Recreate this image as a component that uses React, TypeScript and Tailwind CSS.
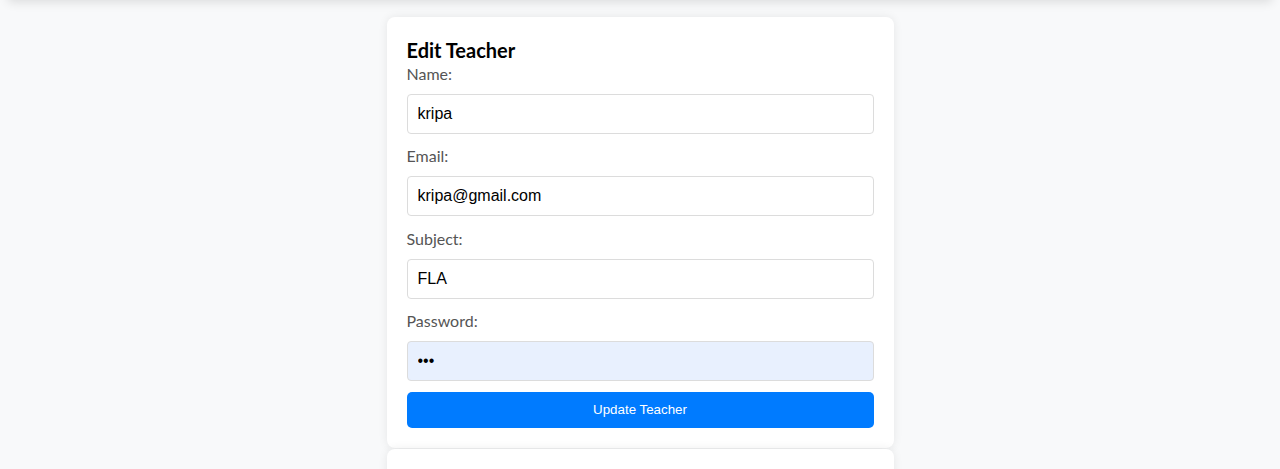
import React from "react";

const labelCls =
  "block text-[16px] leading-[20px] text-[#555] mb-[10px] font-['Lato','Noto_Sans',sans-serif]";
const inputCls =
  "block w-full h-[40px] px-[10px] border border-[#dcdcdc] rounded-[4px] text-[16px] text-black bg-white font-['Liberation_Sans',Arial,sans-serif] outline-none";

export default function App() {
  return (
    <div className="min-h-[469px] bg-[#f8f9fa] overflow-hidden">
      <div className="mx-[8px] -mt-[60px] h-[60px] bg-white shadow-[0_2px_10px_rgba(0,0,0,0.12)]" />
      <div className="w-[507px] mx-auto mt-[17px] bg-white rounded-[8px] shadow-[0_0_10px_rgba(0,0,0,0.08)] p-[20px]">
        <h2 className="text-[20px] leading-[27px] font-bold text-black font-['Lato','Noto_Sans',sans-serif]">
          Edit Teacher
        </h2>
        <form onSubmit={(e) => e.preventDefault()}>
          <label className={labelCls}>Name:</label>
          <input className={inputCls + " mb-[12px]"} defaultValue="kripa" />
          <label className={labelCls}>Email:</label>
          <input className={inputCls + " mb-[13px]"} defaultValue="kripa@gmail.com" />
          <label className={labelCls}>Subject:</label>
          <input className={inputCls + " mb-[12px]"} defaultValue="FLA" />
          <label className={labelCls}>Password:</label>
          <input
            type="password"
            className={inputCls.replace("bg-white", "bg-[#e8f0fe]") + " mb-[11px]"}
            defaultValue="abc"
          />
          <button
            type="submit"
            className="block w-full h-[36px] rounded-[5px] bg-[#007bff] text-white text-[13.333px] font-['Liberation_Sans',Arial,sans-serif]"
          >
            Update Teacher
          </button>
        </form>
      </div>
      <div className="w-[507px] mx-auto mt-[1px] h-[60px] bg-white rounded-[8px] shadow-[0_0_10px_rgba(0,0,0,0.08)]" />
    </div>
  );
}
